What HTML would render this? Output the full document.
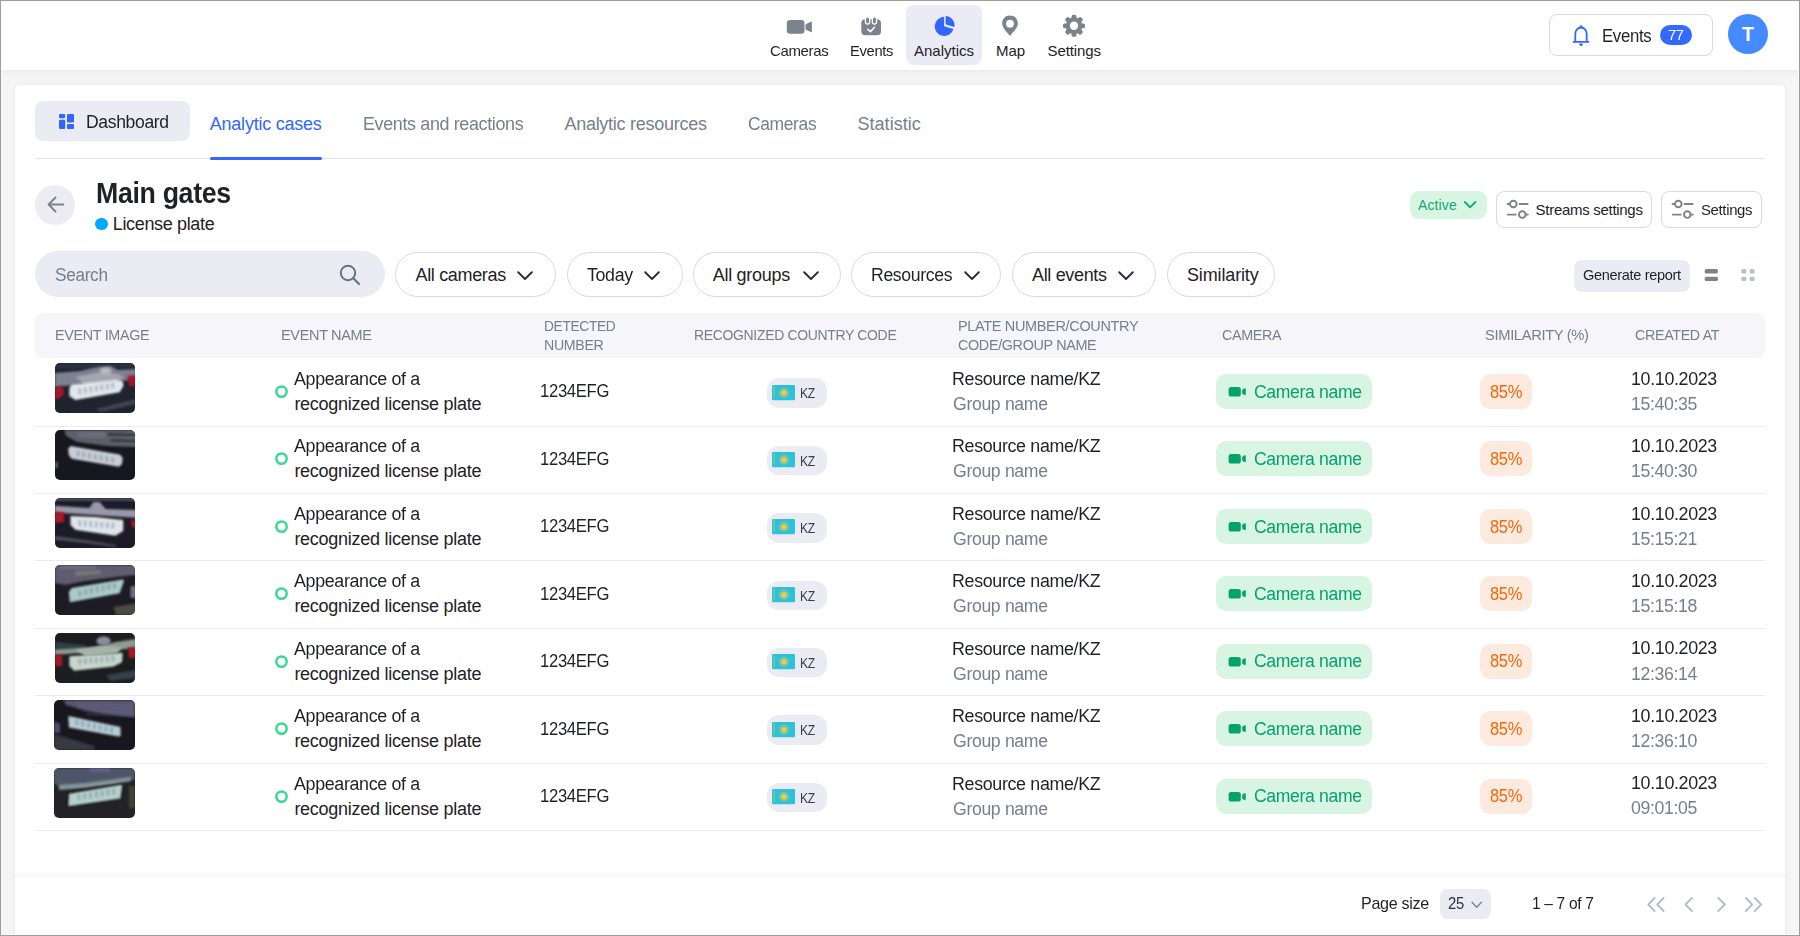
<!DOCTYPE html>
<html><head><meta charset="utf-8"><style>
html,body{margin:0;padding:0;}
body{width:1800px;height:936px;overflow:hidden;position:relative;background:#f5f5f5;font-family:"Liberation Sans",sans-serif;}
.t{position:absolute;white-space:nowrap;line-height:1;}
.b{position:absolute;box-sizing:border-box;}
.s{position:absolute;overflow:visible;}
</style></head><body>
<div class="b" style="left:0px;top:0px;width:1800px;height:70px;background:#ffffff;border-radius:0px;box-shadow:0 1px 6px rgba(0,0,0,0.07);z-index:1;"></div>
<div style="position:absolute;left:0;top:0;width:1800px;height:70px;z-index:2;">
<div class="b" style="left:906px;top:5px;width:76px;height:60px;background:#ebebf5;border-radius:8px;"></div>
<svg class="s" style="left:786px;top:19px;" width="26" height="16" viewBox="0 0 26 16"><rect x="0.8" y="1.1" width="17.7" height="13.6" rx="3.2" fill="#7b838c"/><path d="M20 5.6 L25.3 3 L25.3 12.8 L20 10.2 Z" fill="#7b838c" stroke="#7b838c" stroke-width="1" stroke-linejoin="round"/></svg>
<svg class="s" style="left:860px;top:16px;" width="22" height="21" viewBox="0 0 22 21"><rect x="1.3" y="3.2" width="19.7" height="16.1" rx="4" fill="#7b838c"/><rect x="5.45" y="0.9" width="4.2" height="7.2" rx="2.1" fill="#7b838c" stroke="#fff" stroke-width="1.3"/><rect x="12.35" y="0.9" width="4.2" height="7.2" rx="2.1" fill="#7b838c" stroke="#fff" stroke-width="1.3"/><path d="M7.8 13.3 L10.5 15.6 L14.5 11.2" fill="none" stroke="#fff" stroke-width="1.6" stroke-linecap="round" stroke-linejoin="round"/></svg>
<svg class="s" style="left:934px;top:16px;" width="22" height="22" viewBox="0 0 22 22"><path d="M10.1 0.8 L10.1 9.6 Q10.1 10.2 10.7 10.4 L19.5 13 A9.6 9.6 0 1 1 10.1 0.8 Z" fill="#3366ff"/><path d="M11.6 0.1 A9.2 9.2 0 0 1 20.4 10.9 L12.2 8.4 Q11.6 8.2 11.6 7.6 Z" fill="#3366ff"/></svg>
<svg class="s" style="left:1001px;top:15.4px;" width="18" height="22" viewBox="0 0 18 22"><path d="M9 0.5 C4.3 0.5 1.2 4 1.2 8.4 C1.2 12.6 6 17 9 21 C12 17 16.8 12.6 16.8 8.4 C16.8 4 13.7 0.5 9 0.5 Z" fill="#7b838c"/><circle cx="9" cy="8.7" r="3.9" fill="#fff"/></svg>
<svg class="s" style="left:1062px;top:14px;" width="24" height="24" viewBox="0 0 24 24"><rect x="9.6" y="0.8" width="4.8" height="6" rx="1.6" fill="#7b838c" transform="rotate(0 12 11.8)"/><rect x="9.6" y="0.8" width="4.8" height="6" rx="1.6" fill="#7b838c" transform="rotate(45 12 11.8)"/><rect x="9.6" y="0.8" width="4.8" height="6" rx="1.6" fill="#7b838c" transform="rotate(90 12 11.8)"/><rect x="9.6" y="0.8" width="4.8" height="6" rx="1.6" fill="#7b838c" transform="rotate(135 12 11.8)"/><rect x="9.6" y="0.8" width="4.8" height="6" rx="1.6" fill="#7b838c" transform="rotate(180 12 11.8)"/><rect x="9.6" y="0.8" width="4.8" height="6" rx="1.6" fill="#7b838c" transform="rotate(225 12 11.8)"/><rect x="9.6" y="0.8" width="4.8" height="6" rx="1.6" fill="#7b838c" transform="rotate(270 12 11.8)"/><rect x="9.6" y="0.8" width="4.8" height="6" rx="1.6" fill="#7b838c" transform="rotate(315 12 11.8)"/><circle cx="12" cy="11.8" r="8.4" fill="#7b838c"/><circle cx="12" cy="11.8" r="4.2" fill="#fff"/></svg>
<div class="t" style="left:769.7px;top:43.00px;font-size:15px;color:#1f2126;letter-spacing:-0.350px;transform:scaleX(0.9991);transform-origin:0 0;">Cameras</div>
<div class="t" style="left:849.8px;top:43.00px;font-size:15px;color:#1f2126;letter-spacing:-0.350px;transform:scaleX(0.9840);transform-origin:0 0;">Events</div>
<div class="t" style="left:914.0px;top:43.00px;font-size:15px;color:#1f2126;letter-spacing:-0.003px;">Analytics</div>
<div class="t" style="left:996.0px;top:43.00px;font-size:15px;color:#1f2126;letter-spacing:-0.090px;">Map</div>
<div class="t" style="left:1047.5px;top:43.00px;font-size:15px;color:#1f2126;letter-spacing:-0.100px;">Settings</div>
<div class="b" style="left:1549px;top:14px;width:164px;height:41.5px;background:#fff;border-radius:8px;border:1px solid #d5dae3;"></div>
<svg class="s" style="left:1572px;top:24px;" width="18" height="23" viewBox="0 0 18 23"><path d="M3.3 18.3 L3.3 10 C3.3 6.3 5.8 3.5 9 3.5 C12.2 3.5 14.7 6.3 14.7 10 L14.7 18.3" fill="none" stroke="#3366ff" stroke-width="1.8"/><path d="M1.6 17.9 L16.4 17.9" stroke="#3366ff" stroke-width="1.9" stroke-linecap="round"/><circle cx="9" cy="2.6" r="1.3" fill="#3366ff"/><path d="M7.6 20.2 L10.4 20.2 L9 21.7 Z" fill="#3366ff" stroke="#3366ff" stroke-width="1.2" stroke-linejoin="round"/></svg>
<div class="t" style="left:1601.8px;top:27.00px;font-size:18px;color:#1f2126;letter-spacing:-0.350px;transform:scaleX(0.9309);transform-origin:0 0;">Events</div>
<div class="b" style="left:1660px;top:25px;width:32px;height:20px;background:#3369ff;border-radius:10px;"></div>
<div class="t" style="left:1667.7px;top:27.00px;font-size:15px;color:#fff;letter-spacing:-0.350px;transform:scaleX(0.9795);transform-origin:0 0;">77</div>
<div class="b" style="left:1728px;top:14px;width:40px;height:40px;background:#458aff;border-radius:20px;"></div>
<div class="t" style="left:1742.0px;top:25.00px;font-size:19.5px;color:#fff;font-weight:bold;">T</div>
</div>
<div class="b" style="left:15px;top:85px;width:1770px;height:900px;background:#fff;border-radius:5px;box-shadow:0 0 6px rgba(0,0,0,0.06);"></div>
<div class="b" style="left:35px;top:101px;width:155px;height:40px;background:#ebebf3;border-radius:8px;"></div>
<svg class="s" style="left:59px;top:114px;" width="15" height="15" viewBox="0 0 15 15"><rect x="0" y="0" width="6.2" height="4.2" rx="1.1" fill="#3366ff"/><rect x="0" y="5.8" width="6.2" height="9.2" rx="1.1" fill="#3366ff"/><rect x="8" y="0" width="7" height="8.5" rx="1.1" fill="#3366ff"/><rect x="8" y="10" width="7" height="5" rx="1.1" fill="#3366ff"/></svg>
<div class="t" style="left:86.2px;top:113.00px;font-size:18px;color:#1f2126;letter-spacing:-0.350px;transform:scaleX(0.9747);transform-origin:0 0;">Dashboard</div>
<div class="t" style="left:209.8px;top:115.00px;font-size:18px;color:#3366ff;letter-spacing:-0.235px;">Analytic cases</div>
<div class="t" style="left:362.8px;top:115.00px;font-size:18px;color:#75808d;letter-spacing:-0.350px;transform:scaleX(0.9947);transform-origin:0 0;">Events and reactions</div>
<div class="t" style="left:564.4px;top:115.00px;font-size:18px;color:#75808d;letter-spacing:-0.262px;">Analytic resources</div>
<div class="t" style="left:748.0px;top:115.00px;font-size:18px;color:#75808d;letter-spacing:-0.350px;transform:scaleX(0.9673);transform-origin:0 0;">Cameras</div>
<div class="t" style="left:857.5px;top:115.00px;font-size:18px;color:#75808d;letter-spacing:0.035px;">Statistic</div>
<div class="b" style="left:35px;top:158px;width:1730px;height:1px;background:#dfe3ea;border-radius:0px;"></div>
<div class="b" style="left:210px;top:156.5px;width:112px;height:3px;background:#3366ff;border-radius:2px;"></div>
<div class="b" style="left:35px;top:185px;width:40px;height:40px;background:#ececf2;border-radius:20px;"></div>
<svg class="s" style="left:47px;top:196px;" width="18" height="18" viewBox="0 0 18 18"><path d="M16.3 8.5 L2.2 8.5 M8.5 1.5 L1.6 8.5 L8.5 15.5" fill="none" stroke="#7b838c" stroke-width="1.9" stroke-linecap="round" stroke-linejoin="round"/></svg>
<div class="t" style="left:96.2px;top:179.00px;font-size:29px;color:#1f2126;letter-spacing:-0.350px;transform:scaleX(0.9208);transform-origin:0 0;font-weight:bold;">Main gates</div>
<div class="b" style="left:95px;top:217.5px;width:12.5px;height:12.5px;background:#00aaff;border-radius:7px;"></div>
<div class="t" style="left:112.8px;top:215.00px;font-size:18px;color:#1f2126;letter-spacing:-0.348px;">License plate</div>
<div class="b" style="left:1410px;top:191px;width:77px;height:28px;background:#d8f5e4;border-radius:9px;"></div>
<div class="t" style="left:1418.0px;top:198.00px;font-size:14px;color:#12a776;letter-spacing:0.115px;">Active</div>
<svg class="s" style="left:1463px;top:200px;" width="15" height="10" viewBox="0 0 15 10"><path d="M1.8 2 L7.1 7.4 L12.4 2" fill="none" stroke="#12a776" stroke-width="1.8" stroke-linecap="round" stroke-linejoin="round"/></svg>
<div class="b" style="left:1495.5px;top:191px;width:156.5px;height:37px;background:#fff;border-radius:8px;border:1px solid #d5dae3;"></div>
<svg class="s" style="left:1507px;top:200px;" width="22" height="19" viewBox="0 0 22 19"><g fill="none" stroke="#7b838c" stroke-width="1.9" stroke-linecap="round"><circle cx="6.3" cy="4" r="3.3"/><path d="M0.6 4 L3 4 M12.6 4 L20.6 4"/><circle cx="15.3" cy="14.6" r="3.3"/><path d="M0.8 14.6 L8.8 14.6 M18.6 14.6 L20.8 14.6"/></g></svg>
<div class="t" style="left:1535.6px;top:202.00px;font-size:15px;color:#1f2126;letter-spacing:-0.294px;">Streams settings</div>
<div class="b" style="left:1660.5px;top:191px;width:101.5px;height:37px;background:#fff;border-radius:8px;border:1px solid #d5dae3;"></div>
<svg class="s" style="left:1671.5px;top:200px;" width="22" height="19" viewBox="0 0 22 19"><g fill="none" stroke="#7b838c" stroke-width="1.9" stroke-linecap="round"><circle cx="6.3" cy="4" r="3.3"/><path d="M0.6 4 L3 4 M12.6 4 L20.6 4"/><circle cx="15.3" cy="14.6" r="3.3"/><path d="M0.8 14.6 L8.8 14.6 M18.6 14.6 L20.8 14.6"/></g></svg>
<div class="t" style="left:1701.0px;top:202.00px;font-size:15px;color:#1f2126;letter-spacing:-0.350px;transform:scaleX(0.9952);transform-origin:0 0;">Settings</div>
<div class="b" style="left:35px;top:251px;width:350px;height:46px;background:#ebebf3;border-radius:23px;"></div>
<div class="t" style="left:55.1px;top:266.00px;font-size:18px;color:#75808d;letter-spacing:-0.350px;transform:scaleX(0.9587);transform-origin:0 0;">Search</div>
<svg class="s" style="left:339px;top:264px;" width="22" height="22" viewBox="0 0 22 22"><circle cx="9" cy="9" r="7.2" fill="none" stroke="#6b737c" stroke-width="2"/><path d="M14.3 14.3 L20 20" stroke="#6b737c" stroke-width="2.2" stroke-linecap="round"/></svg>
<div class="b" style="left:395px;top:252px;width:161px;height:45px;background:#fff;border-radius:23px;border:1px solid #d5dae3;"></div>
<div class="t" style="left:415.5px;top:266.00px;font-size:18px;color:#1f2126;letter-spacing:-0.333px;">All cameras</div>
<svg class="s" style="left:517px;top:270.5px;" width="16" height="10" viewBox="0 0 16 10"><path d="M1.2 1.2 L8 8 L14.8 1.2" fill="none" stroke="#2f3140" stroke-width="2" stroke-linecap="round" stroke-linejoin="round"/></svg>
<div class="b" style="left:566.6px;top:252px;width:116px;height:45px;background:#fff;border-radius:23px;border:1px solid #d5dae3;"></div>
<div class="t" style="left:586.7px;top:266.00px;font-size:18px;color:#1f2126;letter-spacing:-0.350px;transform:scaleX(0.9886);transform-origin:0 0;">Today</div>
<svg class="s" style="left:644px;top:270.5px;" width="16" height="10" viewBox="0 0 16 10"><path d="M1.2 1.2 L8 8 L14.8 1.2" fill="none" stroke="#2f3140" stroke-width="2" stroke-linecap="round" stroke-linejoin="round"/></svg>
<div class="b" style="left:693px;top:252px;width:147.5px;height:45px;background:#fff;border-radius:23px;border:1px solid #d5dae3;"></div>
<div class="t" style="left:712.7px;top:266.00px;font-size:18px;color:#1f2126;letter-spacing:-0.282px;">All groups</div>
<svg class="s" style="left:803px;top:270.5px;" width="16" height="10" viewBox="0 0 16 10"><path d="M1.2 1.2 L8 8 L14.8 1.2" fill="none" stroke="#2f3140" stroke-width="2" stroke-linecap="round" stroke-linejoin="round"/></svg>
<div class="b" style="left:851.2px;top:252px;width:150.2px;height:45px;background:#fff;border-radius:23px;border:1px solid #d5dae3;"></div>
<div class="t" style="left:870.5px;top:266.00px;font-size:18px;color:#1f2126;letter-spacing:-0.350px;transform:scaleX(0.9791);transform-origin:0 0;">Resources</div>
<svg class="s" style="left:963.5px;top:270.5px;" width="16" height="10" viewBox="0 0 16 10"><path d="M1.2 1.2 L8 8 L14.8 1.2" fill="none" stroke="#2f3140" stroke-width="2" stroke-linecap="round" stroke-linejoin="round"/></svg>
<div class="b" style="left:1012.4px;top:252px;width:144px;height:45px;background:#fff;border-radius:23px;border:1px solid #d5dae3;"></div>
<div class="t" style="left:1032.0px;top:266.00px;font-size:18px;color:#1f2126;letter-spacing:-0.338px;">All events</div>
<svg class="s" style="left:1118px;top:270.5px;" width="16" height="10" viewBox="0 0 16 10"><path d="M1.2 1.2 L8 8 L14.8 1.2" fill="none" stroke="#2f3140" stroke-width="2" stroke-linecap="round" stroke-linejoin="round"/></svg>
<div class="b" style="left:1167.4px;top:252px;width:108px;height:45px;background:#fff;border-radius:23px;border:1px solid #d5dae3;"></div>
<div class="t" style="left:1187.0px;top:266.00px;font-size:18px;color:#1f2126;letter-spacing:-0.144px;">Similarity</div>
<div class="b" style="left:1574px;top:259.5px;width:116px;height:32px;background:#ebebf3;border-radius:8px;"></div>
<div class="t" style="left:1583.0px;top:267.00px;font-size:15px;color:#1f2126;letter-spacing:-0.350px;transform:scaleX(0.9704);transform-origin:0 0;">Generate report</div>
<svg class="s" style="left:1704px;top:268px;" width="15" height="14" viewBox="0 0 15 14"><rect x="0.7" y="1.1" width="13.2" height="4.4" rx="1.6" fill="#7b838c"/><rect x="0.7" y="8.7" width="13.2" height="4.4" rx="1.6" fill="#7b838c"/></svg>
<svg class="s" style="left:1741px;top:268px;" width="15" height="14" viewBox="0 0 15 14"><g fill="#b9bfc6"><rect x="0.3" y="1.1" width="5" height="4.4" rx="1.5"/><rect x="8.6" y="1.1" width="5" height="4.4" rx="1.5"/><rect x="0.3" y="8.7" width="5" height="4.4" rx="1.5"/><rect x="8.6" y="8.7" width="5" height="4.4" rx="1.5"/></g></svg>
<div class="b" style="left:35px;top:313px;width:1730px;height:45px;background:#f5f5fa;border-radius:8px;"></div>
<div class="t" style="left:55.4px;top:327.00px;font-size:15px;color:#74808c;letter-spacing:-0.350px;transform:scaleX(0.9580);transform-origin:0 0;">EVENT IMAGE</div>
<div class="t" style="left:280.7px;top:327.00px;font-size:15px;color:#74808c;letter-spacing:-0.350px;transform:scaleX(0.9671);transform-origin:0 0;">EVENT NAME</div>
<div class="t" style="left:544.4px;top:318.00px;font-size:15px;color:#74808c;letter-spacing:-0.350px;transform:scaleX(0.9147);transform-origin:0 0;">DETECTED</div>
<div class="t" style="left:544.4px;top:337.00px;font-size:15px;color:#74808c;letter-spacing:-0.350px;transform:scaleX(0.9454);transform-origin:0 0;">NUMBER</div>
<div class="t" style="left:694.0px;top:327.00px;font-size:15px;color:#74808c;letter-spacing:-0.350px;transform:scaleX(0.9315);transform-origin:0 0;">RECOGNIZED COUNTRY CODE</div>
<div class="t" style="left:957.7px;top:318.00px;font-size:15px;color:#74808c;letter-spacing:-0.350px;transform:scaleX(0.9658);transform-origin:0 0;">PLATE NUMBER/COUNTRY</div>
<div class="t" style="left:957.7px;top:337.00px;font-size:15px;color:#74808c;letter-spacing:-0.350px;transform:scaleX(0.9569);transform-origin:0 0;">CODE/GROUP NAME</div>
<div class="t" style="left:1221.6px;top:327.00px;font-size:15px;color:#74808c;letter-spacing:-0.350px;transform:scaleX(0.9547);transform-origin:0 0;">CAMERA</div>
<div class="t" style="left:1485.2px;top:327.00px;font-size:15px;color:#74808c;letter-spacing:-0.350px;transform:scaleX(0.9809);transform-origin:0 0;">SIMILARITY (%)</div>
<div class="t" style="left:1635.0px;top:327.00px;font-size:15px;color:#74808c;letter-spacing:-0.350px;transform:scaleX(0.9515);transform-origin:0 0;">CREATED AT</div>
<div class="b" style="left:35px;top:426px;width:1730px;height:1px;background:#ebebf2;border-radius:0px;"></div>
<div class="b" style="left:55px;top:362.9px;width:80px;height:50px;border-radius:5px;overflow:hidden;"><svg width="81" height="50" viewBox="0 0 80 50" preserveAspectRatio="none" style="display:block"><defs><filter id="fb0" x="-20%" y="-20%" width="140%" height="140%"><feGaussianBlur stdDeviation="1.1"/></filter></defs><path d="M0.0 0.0 L80.0 0.0 L80.0 50.0 L0.0 50.0Z" fill="#202330"/><path d="M0.0 0.0 L80.0 0.0 L80.0 4.0 L0.0 6.0Z" fill="#2b3040" filter="url(#fb0)"/><path d="M0.0 10.0 L25.0 8.0 L42.0 4.0 L55.0 3.0 L62.0 7.0 L80.0 6.0 L80.0 16.0 L66.0 18.0 L40.0 19.0 L18.0 22.0 L0.0 24.0Z" fill="#7d808e" filter="url(#fb0)"/><path d="M20.0 14.0 L45.0 9.0 L62.0 11.0 L68.0 14.0 L60.0 19.0 L30.0 22.0Z" fill="#a3a6b2" filter="url(#fb0)"/><ellipse cx="50" cy="8" rx="6" ry="3.5" fill="#b5b7c2" filter="url(#fb0)"/><path d="M0.0 25.0 L7.0 23.0 L9.0 30.0 L4.0 36.0 L0.0 36.0Z" fill="#a8182c" filter="url(#fb0)"/><path d="M71.0 13.0 L80.0 12.0 L80.0 22.0 L74.0 24.0Z" fill="#a0182a" filter="url(#fb0)"/><path d="M14.2 25.1 L16.0 21.5 L40.0 19.0 L60.2 16.7 L66.8 17.9 L67.7 22.7 L63.8 29.3 L20.1 37.1 L14.2 32.9Z" fill="#e0e8ec" filter="url(#fb0)"/><path d="M40.0 46.0 L80.0 36.0 L80.0 41.0 L45.0 49.0Z" fill="#4e5560" opacity="0.7" filter="url(#fb0)"/><path d="M0.0 38.0 L8.0 36.0 L12.0 50.0 L0.0 50.0Z" fill="#1c2a26" opacity="0.8" filter="url(#fb0)"/><rect x="22.9" y="25.5" width="3.2" height="6" fill="#5a6670" opacity="0.3" filter="url(#fb0)"/><rect x="28.3" y="24.5" width="3.2" height="6" fill="#5a6670" opacity="0.3" filter="url(#fb0)"/><rect x="33.8" y="23.5" width="3.2" height="6" fill="#5a6670" opacity="0.3" filter="url(#fb0)"/><rect x="39.2" y="22.5" width="3.2" height="6" fill="#5a6670" opacity="0.3" filter="url(#fb0)"/><rect x="44.6" y="21.5" width="3.2" height="6" fill="#5a6670" opacity="0.3" filter="url(#fb0)"/><rect x="50.1" y="20.5" width="3.2" height="6" fill="#5a6670" opacity="0.3" filter="url(#fb0)"/><rect x="55.5" y="19.5" width="3.2" height="6" fill="#5a6670" opacity="0.3" filter="url(#fb0)"/></svg></div>
<svg class="s" style="left:274px;top:384.85px;" width="15" height="15" viewBox="0 0 15 15"><circle cx="7.5" cy="6.6" r="5.2" fill="none" stroke="#3ad993" stroke-width="2.5"/></svg>
<div class="t" style="left:294.4px;top:370.00px;font-size:18px;color:#1f2126;letter-spacing:-0.350px;transform:scaleX(0.9921);transform-origin:0 0;">Appearance of a</div>
<div class="t" style="left:294.4px;top:395.00px;font-size:18px;color:#1f2126;letter-spacing:-0.266px;">recognized license plate</div>
<div class="t" style="left:539.5px;top:382.00px;font-size:18px;color:#1f2126;letter-spacing:-0.350px;transform:scaleX(0.9260);transform-origin:0 0;">1234EFG</div>
<div class="b" style="left:766.7px;top:378.15000000000003px;width:60px;height:29.5px;background:#ebebf3;border-radius:12px;"></div>
<svg class="s" style="left:772px;top:384.55px;" width="24" height="16" viewBox="0 0 24 16"><rect x="0" y="0" width="23" height="15.3" rx="1.2" fill="#2cc2dc"/><path d="M1.5 1.2 L2.6 2.2 L1.5 3.2 L2.6 4.2 L1.5 5.2 L2.6 6.2 L1.5 7.2 L2.6 8.2 L1.5 9.2 L2.6 10.2 L1.5 11.2 L2.6 12.2 L1.5 13.2" fill="none" stroke="#d9c24a" stroke-width="0.8"/><path d="M12 7.8 L12 2.9" stroke="#f7c93e" stroke-width="0.9" transform="rotate(0 12 7.8)"/><path d="M12 7.8 L12 2.9" stroke="#f7c93e" stroke-width="0.9" transform="rotate(30 12 7.8)"/><path d="M12 7.8 L12 2.9" stroke="#f7c93e" stroke-width="0.9" transform="rotate(60 12 7.8)"/><path d="M12 7.8 L12 2.9" stroke="#f7c93e" stroke-width="0.9" transform="rotate(90 12 7.8)"/><path d="M12 7.8 L12 2.9" stroke="#f7c93e" stroke-width="0.9" transform="rotate(120 12 7.8)"/><path d="M12 7.8 L12 2.9" stroke="#f7c93e" stroke-width="0.9" transform="rotate(150 12 7.8)"/><path d="M12 7.8 L12 2.9" stroke="#f7c93e" stroke-width="0.9" transform="rotate(180 12 7.8)"/><path d="M12 7.8 L12 2.9" stroke="#f7c93e" stroke-width="0.9" transform="rotate(210 12 7.8)"/><path d="M12 7.8 L12 2.9" stroke="#f7c93e" stroke-width="0.9" transform="rotate(240 12 7.8)"/><path d="M12 7.8 L12 2.9" stroke="#f7c93e" stroke-width="0.9" transform="rotate(270 12 7.8)"/><path d="M12 7.8 L12 2.9" stroke="#f7c93e" stroke-width="0.9" transform="rotate(300 12 7.8)"/><path d="M12 7.8 L12 2.9" stroke="#f7c93e" stroke-width="0.9" transform="rotate(330 12 7.8)"/><circle cx="12" cy="7.8" r="3.3" fill="#2cc2dc"/><circle cx="12" cy="7.8" r="2.8" fill="#f9c83e"/></svg>
<div class="t" style="left:799.9px;top:385.00px;font-size:15px;color:#3a3d48;letter-spacing:-0.350px;transform:scaleX(0.8078);transform-origin:0 0;">KZ</div>
<div class="t" style="left:952.3px;top:370.00px;font-size:18px;color:#1f2126;letter-spacing:-0.350px;transform:scaleX(0.9925);transform-origin:0 0;">Resource name/KZ</div>
<div class="t" style="left:952.7px;top:395.00px;font-size:18px;color:#75808d;letter-spacing:-0.350px;transform:scaleX(0.9803);transform-origin:0 0;">Group name</div>
<div class="b" style="left:1216px;top:373.85px;width:156px;height:35px;background:#d8f5e4;border-radius:10px;"></div>
<svg class="s" style="left:1228px;top:385.85px;" width="19" height="12" viewBox="0 0 19 12"><rect x="0.6" y="0.9" width="12.2" height="9.6" rx="2.6" fill="#05a26c"/><path d="M14.4 4.6 Q14.4 3.6 15.4 3.2 L17.4 2.6 L17.4 8.8 L15.4 8.2 Q14.4 7.8 14.4 6.8 Z" fill="#05a26c" stroke="#05a26c" stroke-width="0.7" stroke-linejoin="round"/></svg>
<div class="t" style="left:1254.1px;top:383.00px;font-size:18px;color:#05a26c;letter-spacing:-0.350px;transform:scaleX(0.9770);transform-origin:0 0;">Camera name</div>
<div class="b" style="left:1480.4px;top:373.85px;width:51.6px;height:35px;background:#fceadf;border-radius:10px;"></div>
<div class="t" style="left:1490.0px;top:383.00px;font-size:18px;color:#ee6a0e;letter-spacing:-0.350px;transform:scaleX(0.9143);transform-origin:0 0;">85%</div>
<div class="t" style="left:1630.9px;top:370.00px;font-size:18px;color:#1f2126;letter-spacing:-0.350px;transform:scaleX(0.9926);transform-origin:0 0;">10.10.2023</div>
<div class="t" style="left:1630.9px;top:395.00px;font-size:18px;color:#75808d;letter-spacing:-0.350px;transform:scaleX(0.9820);transform-origin:0 0;">15:40:35</div>
<div class="b" style="left:35px;top:493px;width:1730px;height:1px;background:#ebebf2;border-radius:0px;"></div>
<div class="b" style="left:55px;top:430.3px;width:80px;height:50px;border-radius:5px;overflow:hidden;"><svg width="81" height="50" viewBox="0 0 80 50" preserveAspectRatio="none" style="display:block"><defs><filter id="fb1" x="-20%" y="-20%" width="140%" height="140%"><feGaussianBlur stdDeviation="1.1"/></filter></defs><path d="M0.0 0.0 L80.0 0.0 L80.0 50.0 L0.0 50.0Z" fill="#17171f"/><path d="M9.0 0.0 L80.0 0.0 L80.0 17.0 L52.0 16.0 L22.0 12.0 L11.0 6.0Z" fill="#5a5e6a" filter="url(#fb1)"/><path d="M20.0 2.0 L50.0 2.0 L50.0 8.0 L25.0 8.0Z" fill="#6e7080" opacity="0.8" filter="url(#fb1)"/><path d="M52.0 3.0 L80.0 4.0 L80.0 6.0 L52.0 5.5Z" fill="#2a2b33" opacity="0.8" filter="url(#fb1)"/><path d="M55.0 9.0 L80.0 10.0 L80.0 12.0 L55.0 11.5Z" fill="#2a2b33" opacity="0.8" filter="url(#fb1)"/><path d="M13.0 19.1 L15.3 16.1 L63.8 24.5 L66.8 27.5 L66.2 34.1 L63.2 36.8 L16.5 28.7 L13.6 25.1Z" fill="#c7ced7" filter="url(#fb1)"/><path d="M0.0 32.0 L3.0 32.0 L3.0 38.0 L0.0 38.0Z" fill="#7a7890" opacity="0.7" filter="url(#fb1)"/><rect x="21.1" y="20.5" width="3.2" height="6" fill="#5a6670" opacity="0.3" filter="url(#fb1)"/><rect x="26.8" y="21.6" width="3.2" height="6" fill="#5a6670" opacity="0.3" filter="url(#fb1)"/><rect x="32.5" y="22.7" width="3.2" height="6" fill="#5a6670" opacity="0.3" filter="url(#fb1)"/><rect x="38.2" y="23.8" width="3.2" height="6" fill="#5a6670" opacity="0.3" filter="url(#fb1)"/><rect x="43.9" y="24.8" width="3.2" height="6" fill="#5a6670" opacity="0.3" filter="url(#fb1)"/><rect x="49.6" y="25.9" width="3.2" height="6" fill="#5a6670" opacity="0.3" filter="url(#fb1)"/><rect x="55.3" y="27.0" width="3.2" height="6" fill="#5a6670" opacity="0.3" filter="url(#fb1)"/></svg></div>
<svg class="s" style="left:274px;top:452.32500000000005px;" width="15" height="15" viewBox="0 0 15 15"><circle cx="7.5" cy="6.6" r="5.2" fill="none" stroke="#3ad993" stroke-width="2.5"/></svg>
<div class="t" style="left:294.4px;top:437.00px;font-size:18px;color:#1f2126;letter-spacing:-0.350px;transform:scaleX(0.9921);transform-origin:0 0;">Appearance of a</div>
<div class="t" style="left:294.4px;top:462.00px;font-size:18px;color:#1f2126;letter-spacing:-0.266px;">recognized license plate</div>
<div class="t" style="left:539.5px;top:450.00px;font-size:18px;color:#1f2126;letter-spacing:-0.350px;transform:scaleX(0.9260);transform-origin:0 0;">1234EFG</div>
<div class="b" style="left:766.7px;top:445.62500000000006px;width:60px;height:29.5px;background:#ebebf3;border-radius:12px;"></div>
<svg class="s" style="left:772px;top:452.02500000000003px;" width="24" height="16" viewBox="0 0 24 16"><rect x="0" y="0" width="23" height="15.3" rx="1.2" fill="#2cc2dc"/><path d="M1.5 1.2 L2.6 2.2 L1.5 3.2 L2.6 4.2 L1.5 5.2 L2.6 6.2 L1.5 7.2 L2.6 8.2 L1.5 9.2 L2.6 10.2 L1.5 11.2 L2.6 12.2 L1.5 13.2" fill="none" stroke="#d9c24a" stroke-width="0.8"/><path d="M12 7.8 L12 2.9" stroke="#f7c93e" stroke-width="0.9" transform="rotate(0 12 7.8)"/><path d="M12 7.8 L12 2.9" stroke="#f7c93e" stroke-width="0.9" transform="rotate(30 12 7.8)"/><path d="M12 7.8 L12 2.9" stroke="#f7c93e" stroke-width="0.9" transform="rotate(60 12 7.8)"/><path d="M12 7.8 L12 2.9" stroke="#f7c93e" stroke-width="0.9" transform="rotate(90 12 7.8)"/><path d="M12 7.8 L12 2.9" stroke="#f7c93e" stroke-width="0.9" transform="rotate(120 12 7.8)"/><path d="M12 7.8 L12 2.9" stroke="#f7c93e" stroke-width="0.9" transform="rotate(150 12 7.8)"/><path d="M12 7.8 L12 2.9" stroke="#f7c93e" stroke-width="0.9" transform="rotate(180 12 7.8)"/><path d="M12 7.8 L12 2.9" stroke="#f7c93e" stroke-width="0.9" transform="rotate(210 12 7.8)"/><path d="M12 7.8 L12 2.9" stroke="#f7c93e" stroke-width="0.9" transform="rotate(240 12 7.8)"/><path d="M12 7.8 L12 2.9" stroke="#f7c93e" stroke-width="0.9" transform="rotate(270 12 7.8)"/><path d="M12 7.8 L12 2.9" stroke="#f7c93e" stroke-width="0.9" transform="rotate(300 12 7.8)"/><path d="M12 7.8 L12 2.9" stroke="#f7c93e" stroke-width="0.9" transform="rotate(330 12 7.8)"/><circle cx="12" cy="7.8" r="3.3" fill="#2cc2dc"/><circle cx="12" cy="7.8" r="2.8" fill="#f9c83e"/></svg>
<div class="t" style="left:799.9px;top:453.00px;font-size:15px;color:#3a3d48;letter-spacing:-0.350px;transform:scaleX(0.8078);transform-origin:0 0;">KZ</div>
<div class="t" style="left:952.3px;top:437.00px;font-size:18px;color:#1f2126;letter-spacing:-0.350px;transform:scaleX(0.9925);transform-origin:0 0;">Resource name/KZ</div>
<div class="t" style="left:952.7px;top:462.00px;font-size:18px;color:#75808d;letter-spacing:-0.350px;transform:scaleX(0.9803);transform-origin:0 0;">Group name</div>
<div class="b" style="left:1216px;top:441.32500000000005px;width:156px;height:35px;background:#d8f5e4;border-radius:10px;"></div>
<svg class="s" style="left:1228px;top:453.32500000000005px;" width="19" height="12" viewBox="0 0 19 12"><rect x="0.6" y="0.9" width="12.2" height="9.6" rx="2.6" fill="#05a26c"/><path d="M14.4 4.6 Q14.4 3.6 15.4 3.2 L17.4 2.6 L17.4 8.8 L15.4 8.2 Q14.4 7.8 14.4 6.8 Z" fill="#05a26c" stroke="#05a26c" stroke-width="0.7" stroke-linejoin="round"/></svg>
<div class="t" style="left:1254.1px;top:450.00px;font-size:18px;color:#05a26c;letter-spacing:-0.350px;transform:scaleX(0.9770);transform-origin:0 0;">Camera name</div>
<div class="b" style="left:1480.4px;top:441.32500000000005px;width:51.6px;height:35px;background:#fceadf;border-radius:10px;"></div>
<div class="t" style="left:1490.0px;top:450.00px;font-size:18px;color:#ee6a0e;letter-spacing:-0.350px;transform:scaleX(0.9143);transform-origin:0 0;">85%</div>
<div class="t" style="left:1630.9px;top:437.00px;font-size:18px;color:#1f2126;letter-spacing:-0.350px;transform:scaleX(0.9926);transform-origin:0 0;">10.10.2023</div>
<div class="t" style="left:1630.9px;top:462.00px;font-size:18px;color:#75808d;letter-spacing:-0.350px;transform:scaleX(0.9820);transform-origin:0 0;">15:40:30</div>
<div class="b" style="left:35px;top:560px;width:1730px;height:1px;background:#ebebf2;border-radius:0px;"></div>
<div class="b" style="left:55px;top:497.8px;width:80px;height:50px;border-radius:5px;overflow:hidden;"><svg width="81" height="50" viewBox="0 0 80 50" preserveAspectRatio="none" style="display:block"><defs><filter id="fb2" x="-20%" y="-20%" width="140%" height="140%"><feGaussianBlur stdDeviation="1.1"/></filter></defs><path d="M0.0 0.0 L80.0 0.0 L80.0 50.0 L0.0 50.0Z" fill="#1c1b27"/><path d="M0.0 0.0 L80.0 0.0 L80.0 3.0 L0.0 3.0Z" fill="#6b6a80" opacity="0.6" filter="url(#fb2)"/><path d="M0.0 7.8 L34.0 10.0 L38.0 4.0 L44.0 4.0 L50.0 11.0 L80.0 12.0 L80.0 19.7 L0.0 14.4Z" fill="#9a98a8" filter="url(#fb2)"/><path d="M0.0 14.0 L9.0 14.5 L9.0 24.0 L0.0 25.0Z" fill="#b0182c" filter="url(#fb2)"/><path d="M75.0 22.0 L80.0 22.0 L80.0 29.3 L76.0 29.3Z" fill="#a8182c" filter="url(#fb2)"/><path d="M15.3 18.0 L40.0 19.0 L67.4 22.1 L67.4 32.9 L59.6 37.7 L20.1 31.7 L15.3 26.9Z" fill="#dfe5eb" filter="url(#fb2)"/><path d="M0.0 38.0 L30.0 42.0 L60.0 47.0 L60.0 49.0 L30.0 45.0 L0.0 42.0Z" fill="#5a5c68" opacity="0.8" filter="url(#fb2)"/><rect x="22.9" y="22.2" width="3.2" height="6" fill="#5a6670" opacity="0.3" filter="url(#fb2)"/><rect x="28.3" y="22.6" width="3.2" height="6" fill="#5a6670" opacity="0.3" filter="url(#fb2)"/><rect x="33.8" y="23.1" width="3.2" height="6" fill="#5a6670" opacity="0.3" filter="url(#fb2)"/><rect x="39.2" y="23.5" width="3.2" height="6" fill="#5a6670" opacity="0.3" filter="url(#fb2)"/><rect x="44.6" y="23.9" width="3.2" height="6" fill="#5a6670" opacity="0.3" filter="url(#fb2)"/><rect x="50.1" y="24.4" width="3.2" height="6" fill="#5a6670" opacity="0.3" filter="url(#fb2)"/><rect x="55.5" y="24.8" width="3.2" height="6" fill="#5a6670" opacity="0.3" filter="url(#fb2)"/></svg></div>
<svg class="s" style="left:274px;top:519.775px;" width="15" height="15" viewBox="0 0 15 15"><circle cx="7.5" cy="6.6" r="5.2" fill="none" stroke="#3ad993" stroke-width="2.5"/></svg>
<div class="t" style="left:294.4px;top:505.00px;font-size:18px;color:#1f2126;letter-spacing:-0.350px;transform:scaleX(0.9921);transform-origin:0 0;">Appearance of a</div>
<div class="t" style="left:294.4px;top:530.00px;font-size:18px;color:#1f2126;letter-spacing:-0.266px;">recognized license plate</div>
<div class="t" style="left:539.5px;top:517.00px;font-size:18px;color:#1f2126;letter-spacing:-0.350px;transform:scaleX(0.9260);transform-origin:0 0;">1234EFG</div>
<div class="b" style="left:766.7px;top:513.075px;width:60px;height:29.5px;background:#ebebf3;border-radius:12px;"></div>
<svg class="s" style="left:772px;top:519.4749999999999px;" width="24" height="16" viewBox="0 0 24 16"><rect x="0" y="0" width="23" height="15.3" rx="1.2" fill="#2cc2dc"/><path d="M1.5 1.2 L2.6 2.2 L1.5 3.2 L2.6 4.2 L1.5 5.2 L2.6 6.2 L1.5 7.2 L2.6 8.2 L1.5 9.2 L2.6 10.2 L1.5 11.2 L2.6 12.2 L1.5 13.2" fill="none" stroke="#d9c24a" stroke-width="0.8"/><path d="M12 7.8 L12 2.9" stroke="#f7c93e" stroke-width="0.9" transform="rotate(0 12 7.8)"/><path d="M12 7.8 L12 2.9" stroke="#f7c93e" stroke-width="0.9" transform="rotate(30 12 7.8)"/><path d="M12 7.8 L12 2.9" stroke="#f7c93e" stroke-width="0.9" transform="rotate(60 12 7.8)"/><path d="M12 7.8 L12 2.9" stroke="#f7c93e" stroke-width="0.9" transform="rotate(90 12 7.8)"/><path d="M12 7.8 L12 2.9" stroke="#f7c93e" stroke-width="0.9" transform="rotate(120 12 7.8)"/><path d="M12 7.8 L12 2.9" stroke="#f7c93e" stroke-width="0.9" transform="rotate(150 12 7.8)"/><path d="M12 7.8 L12 2.9" stroke="#f7c93e" stroke-width="0.9" transform="rotate(180 12 7.8)"/><path d="M12 7.8 L12 2.9" stroke="#f7c93e" stroke-width="0.9" transform="rotate(210 12 7.8)"/><path d="M12 7.8 L12 2.9" stroke="#f7c93e" stroke-width="0.9" transform="rotate(240 12 7.8)"/><path d="M12 7.8 L12 2.9" stroke="#f7c93e" stroke-width="0.9" transform="rotate(270 12 7.8)"/><path d="M12 7.8 L12 2.9" stroke="#f7c93e" stroke-width="0.9" transform="rotate(300 12 7.8)"/><path d="M12 7.8 L12 2.9" stroke="#f7c93e" stroke-width="0.9" transform="rotate(330 12 7.8)"/><circle cx="12" cy="7.8" r="3.3" fill="#2cc2dc"/><circle cx="12" cy="7.8" r="2.8" fill="#f9c83e"/></svg>
<div class="t" style="left:799.9px;top:520.00px;font-size:15px;color:#3a3d48;letter-spacing:-0.350px;transform:scaleX(0.8078);transform-origin:0 0;">KZ</div>
<div class="t" style="left:952.3px;top:505.00px;font-size:18px;color:#1f2126;letter-spacing:-0.350px;transform:scaleX(0.9925);transform-origin:0 0;">Resource name/KZ</div>
<div class="t" style="left:952.7px;top:530.00px;font-size:18px;color:#75808d;letter-spacing:-0.350px;transform:scaleX(0.9803);transform-origin:0 0;">Group name</div>
<div class="b" style="left:1216px;top:508.775px;width:156px;height:35px;background:#d8f5e4;border-radius:10px;"></div>
<svg class="s" style="left:1228px;top:520.775px;" width="19" height="12" viewBox="0 0 19 12"><rect x="0.6" y="0.9" width="12.2" height="9.6" rx="2.6" fill="#05a26c"/><path d="M14.4 4.6 Q14.4 3.6 15.4 3.2 L17.4 2.6 L17.4 8.8 L15.4 8.2 Q14.4 7.8 14.4 6.8 Z" fill="#05a26c" stroke="#05a26c" stroke-width="0.7" stroke-linejoin="round"/></svg>
<div class="t" style="left:1254.1px;top:518.00px;font-size:18px;color:#05a26c;letter-spacing:-0.350px;transform:scaleX(0.9770);transform-origin:0 0;">Camera name</div>
<div class="b" style="left:1480.4px;top:508.775px;width:51.6px;height:35px;background:#fceadf;border-radius:10px;"></div>
<div class="t" style="left:1490.0px;top:518.00px;font-size:18px;color:#ee6a0e;letter-spacing:-0.350px;transform:scaleX(0.9143);transform-origin:0 0;">85%</div>
<div class="t" style="left:1630.9px;top:505.00px;font-size:18px;color:#1f2126;letter-spacing:-0.350px;transform:scaleX(0.9926);transform-origin:0 0;">10.10.2023</div>
<div class="t" style="left:1630.9px;top:530.00px;font-size:18px;color:#75808d;letter-spacing:-0.350px;transform:scaleX(0.9820);transform-origin:0 0;">15:15:21</div>
<div class="b" style="left:35px;top:628px;width:1730px;height:1px;background:#ebebf2;border-radius:0px;"></div>
<div class="b" style="left:55px;top:565.2px;width:80px;height:50px;border-radius:5px;overflow:hidden;"><svg width="81" height="50" viewBox="0 0 80 50" preserveAspectRatio="none" style="display:block"><defs><filter id="fb3" x="-20%" y="-20%" width="140%" height="140%"><feGaussianBlur stdDeviation="1.1"/></filter></defs><path d="M0.0 0.0 L80.0 0.0 L80.0 50.0 L0.0 50.0Z" fill="#1d1b23"/><path d="M0.0 0.0 L80.0 0.0 L80.0 10.0 L60.0 12.0 L30.0 16.0 L10.0 20.0 L0.0 18.0Z" fill="#5e5b70" filter="url(#fb3)"/><path d="M20.0 6.0 L45.0 5.0 L45.0 9.0 L20.0 11.0Z" fill="#8a8a78" opacity="0.6" filter="url(#fb3)"/><path d="M5.0 1.0 L40.0 1.0 L40.0 4.0 L5.0 4.0Z" fill="#7c7890" opacity="0.7" filter="url(#fb3)"/><path d="M13.6 27.1 L16.5 22.9 L66.8 14.6 L68.3 15.7 L63.8 28.3 L14.7 37.3Z" fill="#a9c9ca" filter="url(#fb3)"/><path d="M74.6 21.0 L80.0 21.0 L80.0 33.0 L74.6 33.0Z" fill="#8a84a0" opacity="0.8" filter="url(#fb3)"/><path d="M58.0 42.0 L80.0 38.0 L80.0 50.0 L60.0 50.0Z" fill="#5e6050" opacity="0.7" filter="url(#fb3)"/><rect x="23.1" y="25.4" width="3.2" height="6" fill="#5a6670" opacity="0.3" filter="url(#fb3)"/><rect x="28.8" y="24.1" width="3.2" height="6" fill="#5a6670" opacity="0.3" filter="url(#fb3)"/><rect x="34.5" y="22.8" width="3.2" height="6" fill="#5a6670" opacity="0.3" filter="url(#fb3)"/><rect x="40.2" y="21.5" width="3.2" height="6" fill="#5a6670" opacity="0.3" filter="url(#fb3)"/><rect x="45.9" y="20.2" width="3.2" height="6" fill="#5a6670" opacity="0.3" filter="url(#fb3)"/><rect x="51.6" y="18.9" width="3.2" height="6" fill="#5a6670" opacity="0.3" filter="url(#fb3)"/><rect x="57.3" y="17.6" width="3.2" height="6" fill="#5a6670" opacity="0.3" filter="url(#fb3)"/></svg></div>
<svg class="s" style="left:274px;top:587.225px;" width="15" height="15" viewBox="0 0 15 15"><circle cx="7.5" cy="6.6" r="5.2" fill="none" stroke="#3ad993" stroke-width="2.5"/></svg>
<div class="t" style="left:294.4px;top:572.00px;font-size:18px;color:#1f2126;letter-spacing:-0.350px;transform:scaleX(0.9921);transform-origin:0 0;">Appearance of a</div>
<div class="t" style="left:294.4px;top:597.00px;font-size:18px;color:#1f2126;letter-spacing:-0.266px;">recognized license plate</div>
<div class="t" style="left:539.5px;top:585.00px;font-size:18px;color:#1f2126;letter-spacing:-0.350px;transform:scaleX(0.9260);transform-origin:0 0;">1234EFG</div>
<div class="b" style="left:766.7px;top:580.5250000000001px;width:60px;height:29.5px;background:#ebebf3;border-radius:12px;"></div>
<svg class="s" style="left:772px;top:586.925px;" width="24" height="16" viewBox="0 0 24 16"><rect x="0" y="0" width="23" height="15.3" rx="1.2" fill="#2cc2dc"/><path d="M1.5 1.2 L2.6 2.2 L1.5 3.2 L2.6 4.2 L1.5 5.2 L2.6 6.2 L1.5 7.2 L2.6 8.2 L1.5 9.2 L2.6 10.2 L1.5 11.2 L2.6 12.2 L1.5 13.2" fill="none" stroke="#d9c24a" stroke-width="0.8"/><path d="M12 7.8 L12 2.9" stroke="#f7c93e" stroke-width="0.9" transform="rotate(0 12 7.8)"/><path d="M12 7.8 L12 2.9" stroke="#f7c93e" stroke-width="0.9" transform="rotate(30 12 7.8)"/><path d="M12 7.8 L12 2.9" stroke="#f7c93e" stroke-width="0.9" transform="rotate(60 12 7.8)"/><path d="M12 7.8 L12 2.9" stroke="#f7c93e" stroke-width="0.9" transform="rotate(90 12 7.8)"/><path d="M12 7.8 L12 2.9" stroke="#f7c93e" stroke-width="0.9" transform="rotate(120 12 7.8)"/><path d="M12 7.8 L12 2.9" stroke="#f7c93e" stroke-width="0.9" transform="rotate(150 12 7.8)"/><path d="M12 7.8 L12 2.9" stroke="#f7c93e" stroke-width="0.9" transform="rotate(180 12 7.8)"/><path d="M12 7.8 L12 2.9" stroke="#f7c93e" stroke-width="0.9" transform="rotate(210 12 7.8)"/><path d="M12 7.8 L12 2.9" stroke="#f7c93e" stroke-width="0.9" transform="rotate(240 12 7.8)"/><path d="M12 7.8 L12 2.9" stroke="#f7c93e" stroke-width="0.9" transform="rotate(270 12 7.8)"/><path d="M12 7.8 L12 2.9" stroke="#f7c93e" stroke-width="0.9" transform="rotate(300 12 7.8)"/><path d="M12 7.8 L12 2.9" stroke="#f7c93e" stroke-width="0.9" transform="rotate(330 12 7.8)"/><circle cx="12" cy="7.8" r="3.3" fill="#2cc2dc"/><circle cx="12" cy="7.8" r="2.8" fill="#f9c83e"/></svg>
<div class="t" style="left:799.9px;top:588.00px;font-size:15px;color:#3a3d48;letter-spacing:-0.350px;transform:scaleX(0.8078);transform-origin:0 0;">KZ</div>
<div class="t" style="left:952.3px;top:572.00px;font-size:18px;color:#1f2126;letter-spacing:-0.350px;transform:scaleX(0.9925);transform-origin:0 0;">Resource name/KZ</div>
<div class="t" style="left:952.7px;top:597.00px;font-size:18px;color:#75808d;letter-spacing:-0.350px;transform:scaleX(0.9803);transform-origin:0 0;">Group name</div>
<div class="b" style="left:1216px;top:576.225px;width:156px;height:35px;background:#d8f5e4;border-radius:10px;"></div>
<svg class="s" style="left:1228px;top:588.225px;" width="19" height="12" viewBox="0 0 19 12"><rect x="0.6" y="0.9" width="12.2" height="9.6" rx="2.6" fill="#05a26c"/><path d="M14.4 4.6 Q14.4 3.6 15.4 3.2 L17.4 2.6 L17.4 8.8 L15.4 8.2 Q14.4 7.8 14.4 6.8 Z" fill="#05a26c" stroke="#05a26c" stroke-width="0.7" stroke-linejoin="round"/></svg>
<div class="t" style="left:1254.1px;top:585.00px;font-size:18px;color:#05a26c;letter-spacing:-0.350px;transform:scaleX(0.9770);transform-origin:0 0;">Camera name</div>
<div class="b" style="left:1480.4px;top:576.225px;width:51.6px;height:35px;background:#fceadf;border-radius:10px;"></div>
<div class="t" style="left:1490.0px;top:585.00px;font-size:18px;color:#ee6a0e;letter-spacing:-0.350px;transform:scaleX(0.9143);transform-origin:0 0;">85%</div>
<div class="t" style="left:1630.9px;top:572.00px;font-size:18px;color:#1f2126;letter-spacing:-0.350px;transform:scaleX(0.9926);transform-origin:0 0;">10.10.2023</div>
<div class="t" style="left:1630.9px;top:597.00px;font-size:18px;color:#75808d;letter-spacing:-0.350px;transform:scaleX(0.9820);transform-origin:0 0;">15:15:18</div>
<div class="b" style="left:35px;top:695px;width:1730px;height:1px;background:#ebebf2;border-radius:0px;"></div>
<div class="b" style="left:55px;top:632.7px;width:80px;height:50px;border-radius:5px;overflow:hidden;"><svg width="81" height="50" viewBox="0 0 80 50" preserveAspectRatio="none" style="display:block"><defs><filter id="fb4" x="-20%" y="-20%" width="140%" height="140%"><feGaussianBlur stdDeviation="1.1"/></filter></defs><path d="M0.0 0.0 L80.0 0.0 L80.0 50.0 L0.0 50.0Z" fill="#1b1e20"/><path d="M0.0 9.0 L30.0 12.0 L30.0 18.0 L0.0 18.0Z" fill="#33434a" opacity="0.9" filter="url(#fb4)"/><path d="M0.0 16.7 L40.0 14.0 L60.0 9.0 L80.0 6.0 L80.0 15.0 L60.0 17.0 L0.0 22.0Z" fill="#8d9a8c" filter="url(#fb4)"/><path d="M20.0 17.0 L45.0 13.0 L66.0 14.0 L62.0 20.0 L30.0 23.0Z" fill="#a7b3a6" filter="url(#fb4)"/><ellipse cx="48" cy="8" rx="7" ry="4.5" fill="#8a8c9c" filter="url(#fb4)"/><path d="M0.0 22.0 L7.0 22.0 L7.0 33.0 L0.0 33.0Z" fill="#a8182c" filter="url(#fb4)"/><path d="M72.0 14.4 L80.0 14.4 L80.0 25.0 L73.0 25.0Z" fill="#a8182c" filter="url(#fb4)"/><path d="M14.2 23.3 L66.8 19.7 L66.2 29.3 L57.8 33.5 L18.9 37.7 L14.2 32.9Z" fill="#c6d6cc" filter="url(#fb4)"/><path d="M50.0 42.0 L80.0 37.0 L80.0 45.0 L55.0 48.0Z" fill="#3c4a56" opacity="0.8" filter="url(#fb4)"/><rect x="22.9" y="25.7" width="3.2" height="6" fill="#5a6670" opacity="0.3" filter="url(#fb4)"/><rect x="28.3" y="25.1" width="3.2" height="6" fill="#5a6670" opacity="0.3" filter="url(#fb4)"/><rect x="33.8" y="24.6" width="3.2" height="6" fill="#5a6670" opacity="0.3" filter="url(#fb4)"/><rect x="39.2" y="24.0" width="3.2" height="6" fill="#5a6670" opacity="0.3" filter="url(#fb4)"/><rect x="44.6" y="23.4" width="3.2" height="6" fill="#5a6670" opacity="0.3" filter="url(#fb4)"/><rect x="50.1" y="22.9" width="3.2" height="6" fill="#5a6670" opacity="0.3" filter="url(#fb4)"/><rect x="55.5" y="22.3" width="3.2" height="6" fill="#5a6670" opacity="0.3" filter="url(#fb4)"/></svg></div>
<svg class="s" style="left:274px;top:654.6750000000001px;" width="15" height="15" viewBox="0 0 15 15"><circle cx="7.5" cy="6.6" r="5.2" fill="none" stroke="#3ad993" stroke-width="2.5"/></svg>
<div class="t" style="left:294.4px;top:640.00px;font-size:18px;color:#1f2126;letter-spacing:-0.350px;transform:scaleX(0.9921);transform-origin:0 0;">Appearance of a</div>
<div class="t" style="left:294.4px;top:665.00px;font-size:18px;color:#1f2126;letter-spacing:-0.266px;">recognized license plate</div>
<div class="t" style="left:539.5px;top:652.00px;font-size:18px;color:#1f2126;letter-spacing:-0.350px;transform:scaleX(0.9260);transform-origin:0 0;">1234EFG</div>
<div class="b" style="left:766.7px;top:647.9750000000001px;width:60px;height:29.5px;background:#ebebf3;border-radius:12px;"></div>
<svg class="s" style="left:772px;top:654.375px;" width="24" height="16" viewBox="0 0 24 16"><rect x="0" y="0" width="23" height="15.3" rx="1.2" fill="#2cc2dc"/><path d="M1.5 1.2 L2.6 2.2 L1.5 3.2 L2.6 4.2 L1.5 5.2 L2.6 6.2 L1.5 7.2 L2.6 8.2 L1.5 9.2 L2.6 10.2 L1.5 11.2 L2.6 12.2 L1.5 13.2" fill="none" stroke="#d9c24a" stroke-width="0.8"/><path d="M12 7.8 L12 2.9" stroke="#f7c93e" stroke-width="0.9" transform="rotate(0 12 7.8)"/><path d="M12 7.8 L12 2.9" stroke="#f7c93e" stroke-width="0.9" transform="rotate(30 12 7.8)"/><path d="M12 7.8 L12 2.9" stroke="#f7c93e" stroke-width="0.9" transform="rotate(60 12 7.8)"/><path d="M12 7.8 L12 2.9" stroke="#f7c93e" stroke-width="0.9" transform="rotate(90 12 7.8)"/><path d="M12 7.8 L12 2.9" stroke="#f7c93e" stroke-width="0.9" transform="rotate(120 12 7.8)"/><path d="M12 7.8 L12 2.9" stroke="#f7c93e" stroke-width="0.9" transform="rotate(150 12 7.8)"/><path d="M12 7.8 L12 2.9" stroke="#f7c93e" stroke-width="0.9" transform="rotate(180 12 7.8)"/><path d="M12 7.8 L12 2.9" stroke="#f7c93e" stroke-width="0.9" transform="rotate(210 12 7.8)"/><path d="M12 7.8 L12 2.9" stroke="#f7c93e" stroke-width="0.9" transform="rotate(240 12 7.8)"/><path d="M12 7.8 L12 2.9" stroke="#f7c93e" stroke-width="0.9" transform="rotate(270 12 7.8)"/><path d="M12 7.8 L12 2.9" stroke="#f7c93e" stroke-width="0.9" transform="rotate(300 12 7.8)"/><path d="M12 7.8 L12 2.9" stroke="#f7c93e" stroke-width="0.9" transform="rotate(330 12 7.8)"/><circle cx="12" cy="7.8" r="3.3" fill="#2cc2dc"/><circle cx="12" cy="7.8" r="2.8" fill="#f9c83e"/></svg>
<div class="t" style="left:799.9px;top:655.00px;font-size:15px;color:#3a3d48;letter-spacing:-0.350px;transform:scaleX(0.8078);transform-origin:0 0;">KZ</div>
<div class="t" style="left:952.3px;top:640.00px;font-size:18px;color:#1f2126;letter-spacing:-0.350px;transform:scaleX(0.9925);transform-origin:0 0;">Resource name/KZ</div>
<div class="t" style="left:952.7px;top:665.00px;font-size:18px;color:#75808d;letter-spacing:-0.350px;transform:scaleX(0.9803);transform-origin:0 0;">Group name</div>
<div class="b" style="left:1216px;top:643.6750000000001px;width:156px;height:35px;background:#d8f5e4;border-radius:10px;"></div>
<svg class="s" style="left:1228px;top:655.6750000000001px;" width="19" height="12" viewBox="0 0 19 12"><rect x="0.6" y="0.9" width="12.2" height="9.6" rx="2.6" fill="#05a26c"/><path d="M14.4 4.6 Q14.4 3.6 15.4 3.2 L17.4 2.6 L17.4 8.8 L15.4 8.2 Q14.4 7.8 14.4 6.8 Z" fill="#05a26c" stroke="#05a26c" stroke-width="0.7" stroke-linejoin="round"/></svg>
<div class="t" style="left:1254.1px;top:652.00px;font-size:18px;color:#05a26c;letter-spacing:-0.350px;transform:scaleX(0.9770);transform-origin:0 0;">Camera name</div>
<div class="b" style="left:1480.4px;top:643.6750000000001px;width:51.6px;height:35px;background:#fceadf;border-radius:10px;"></div>
<div class="t" style="left:1490.0px;top:652.00px;font-size:18px;color:#ee6a0e;letter-spacing:-0.350px;transform:scaleX(0.9143);transform-origin:0 0;">85%</div>
<div class="t" style="left:1630.9px;top:639.00px;font-size:18px;color:#1f2126;letter-spacing:-0.350px;transform:scaleX(0.9926);transform-origin:0 0;">10.10.2023</div>
<div class="t" style="left:1630.9px;top:665.00px;font-size:18px;color:#75808d;letter-spacing:-0.350px;transform:scaleX(0.9820);transform-origin:0 0;">12:36:14</div>
<div class="b" style="left:35px;top:763px;width:1730px;height:1px;background:#ebebf2;border-radius:0px;"></div>
<div class="b" style="left:54px;top:700.1px;width:81px;height:50px;border-radius:5px;overflow:hidden;"><svg width="81" height="50" viewBox="0 0 80 50" preserveAspectRatio="none" style="display:block"><defs><filter id="fb5" x="-20%" y="-20%" width="140%" height="140%"><feGaussianBlur stdDeviation="1.1"/></filter></defs><path d="M0.0 0.0 L80.0 0.0 L80.0 50.0 L0.0 50.0Z" fill="#18171f"/><path d="M9.0 0.0 L80.0 0.0 L80.0 17.0 L50.0 14.0 L25.0 9.0 L12.0 5.0Z" fill="#55526e" filter="url(#fb5)"/><path d="M20.0 3.0 L80.0 5.0 L80.0 6.0 L20.0 4.0Z" fill="#8c88a8" opacity="0.5" filter="url(#fb5)"/><path d="M24.0 6.5 L80.0 8.5 L80.0 9.5 L24.0 7.5Z" fill="#8c88a8" opacity="0.5" filter="url(#fb5)"/><path d="M28.0 10.0 L80.0 12.0 L80.0 13.0 L28.0 11.0Z" fill="#8c88a8" opacity="0.5" filter="url(#fb5)"/><path d="M32.0 13.5 L80.0 15.5 L80.0 16.5 L32.0 14.5Z" fill="#8c88a8" opacity="0.5" filter="url(#fb5)"/><path d="M0.0 21.0 L6.0 24.0 L6.0 33.0 L0.0 33.0Z" fill="#5c5878" opacity="0.8" filter="url(#fb5)"/><path d="M0.0 34.0 L40.0 46.0 L40.0 50.0 L0.0 50.0Z" fill="#3a3c46" opacity="0.9" filter="url(#fb5)"/><path d="M14.2 16.1 L65.6 26.9 L65.9 35.9 L63.8 36.5 L14.7 27.5Z" fill="#b6ccd6" filter="url(#fb5)"/><rect x="21.1" y="19.6" width="3.2" height="6" fill="#5a6670" opacity="0.3" filter="url(#fb5)"/><rect x="26.8" y="20.8" width="3.2" height="6" fill="#5a6670" opacity="0.3" filter="url(#fb5)"/><rect x="32.5" y="22.0" width="3.2" height="6" fill="#5a6670" opacity="0.3" filter="url(#fb5)"/><rect x="38.2" y="23.2" width="3.2" height="6" fill="#5a6670" opacity="0.3" filter="url(#fb5)"/><rect x="43.9" y="24.5" width="3.2" height="6" fill="#5a6670" opacity="0.3" filter="url(#fb5)"/><rect x="49.6" y="25.7" width="3.2" height="6" fill="#5a6670" opacity="0.3" filter="url(#fb5)"/><rect x="55.3" y="26.9" width="3.2" height="6" fill="#5a6670" opacity="0.3" filter="url(#fb5)"/></svg></div>
<svg class="s" style="left:274px;top:722.125px;" width="15" height="15" viewBox="0 0 15 15"><circle cx="7.5" cy="6.6" r="5.2" fill="none" stroke="#3ad993" stroke-width="2.5"/></svg>
<div class="t" style="left:294.4px;top:707.00px;font-size:18px;color:#1f2126;letter-spacing:-0.350px;transform:scaleX(0.9921);transform-origin:0 0;">Appearance of a</div>
<div class="t" style="left:294.4px;top:732.00px;font-size:18px;color:#1f2126;letter-spacing:-0.266px;">recognized license plate</div>
<div class="t" style="left:539.5px;top:720.00px;font-size:18px;color:#1f2126;letter-spacing:-0.350px;transform:scaleX(0.9260);transform-origin:0 0;">1234EFG</div>
<div class="b" style="left:766.7px;top:715.425px;width:60px;height:29.5px;background:#ebebf3;border-radius:12px;"></div>
<svg class="s" style="left:772px;top:721.825px;" width="24" height="16" viewBox="0 0 24 16"><rect x="0" y="0" width="23" height="15.3" rx="1.2" fill="#2cc2dc"/><path d="M1.5 1.2 L2.6 2.2 L1.5 3.2 L2.6 4.2 L1.5 5.2 L2.6 6.2 L1.5 7.2 L2.6 8.2 L1.5 9.2 L2.6 10.2 L1.5 11.2 L2.6 12.2 L1.5 13.2" fill="none" stroke="#d9c24a" stroke-width="0.8"/><path d="M12 7.8 L12 2.9" stroke="#f7c93e" stroke-width="0.9" transform="rotate(0 12 7.8)"/><path d="M12 7.8 L12 2.9" stroke="#f7c93e" stroke-width="0.9" transform="rotate(30 12 7.8)"/><path d="M12 7.8 L12 2.9" stroke="#f7c93e" stroke-width="0.9" transform="rotate(60 12 7.8)"/><path d="M12 7.8 L12 2.9" stroke="#f7c93e" stroke-width="0.9" transform="rotate(90 12 7.8)"/><path d="M12 7.8 L12 2.9" stroke="#f7c93e" stroke-width="0.9" transform="rotate(120 12 7.8)"/><path d="M12 7.8 L12 2.9" stroke="#f7c93e" stroke-width="0.9" transform="rotate(150 12 7.8)"/><path d="M12 7.8 L12 2.9" stroke="#f7c93e" stroke-width="0.9" transform="rotate(180 12 7.8)"/><path d="M12 7.8 L12 2.9" stroke="#f7c93e" stroke-width="0.9" transform="rotate(210 12 7.8)"/><path d="M12 7.8 L12 2.9" stroke="#f7c93e" stroke-width="0.9" transform="rotate(240 12 7.8)"/><path d="M12 7.8 L12 2.9" stroke="#f7c93e" stroke-width="0.9" transform="rotate(270 12 7.8)"/><path d="M12 7.8 L12 2.9" stroke="#f7c93e" stroke-width="0.9" transform="rotate(300 12 7.8)"/><path d="M12 7.8 L12 2.9" stroke="#f7c93e" stroke-width="0.9" transform="rotate(330 12 7.8)"/><circle cx="12" cy="7.8" r="3.3" fill="#2cc2dc"/><circle cx="12" cy="7.8" r="2.8" fill="#f9c83e"/></svg>
<div class="t" style="left:799.9px;top:722.00px;font-size:15px;color:#3a3d48;letter-spacing:-0.350px;transform:scaleX(0.8078);transform-origin:0 0;">KZ</div>
<div class="t" style="left:952.3px;top:707.00px;font-size:18px;color:#1f2126;letter-spacing:-0.350px;transform:scaleX(0.9925);transform-origin:0 0;">Resource name/KZ</div>
<div class="t" style="left:952.7px;top:732.00px;font-size:18px;color:#75808d;letter-spacing:-0.350px;transform:scaleX(0.9803);transform-origin:0 0;">Group name</div>
<div class="b" style="left:1216px;top:711.125px;width:156px;height:35px;background:#d8f5e4;border-radius:10px;"></div>
<svg class="s" style="left:1228px;top:723.125px;" width="19" height="12" viewBox="0 0 19 12"><rect x="0.6" y="0.9" width="12.2" height="9.6" rx="2.6" fill="#05a26c"/><path d="M14.4 4.6 Q14.4 3.6 15.4 3.2 L17.4 2.6 L17.4 8.8 L15.4 8.2 Q14.4 7.8 14.4 6.8 Z" fill="#05a26c" stroke="#05a26c" stroke-width="0.7" stroke-linejoin="round"/></svg>
<div class="t" style="left:1254.1px;top:720.00px;font-size:18px;color:#05a26c;letter-spacing:-0.350px;transform:scaleX(0.9770);transform-origin:0 0;">Camera name</div>
<div class="b" style="left:1480.4px;top:711.125px;width:51.6px;height:35px;background:#fceadf;border-radius:10px;"></div>
<div class="t" style="left:1490.0px;top:720.00px;font-size:18px;color:#ee6a0e;letter-spacing:-0.350px;transform:scaleX(0.9143);transform-origin:0 0;">85%</div>
<div class="t" style="left:1630.9px;top:707.00px;font-size:18px;color:#1f2126;letter-spacing:-0.350px;transform:scaleX(0.9926);transform-origin:0 0;">10.10.2023</div>
<div class="t" style="left:1630.9px;top:732.00px;font-size:18px;color:#75808d;letter-spacing:-0.350px;transform:scaleX(0.9820);transform-origin:0 0;">12:36:10</div>
<div class="b" style="left:35px;top:830px;width:1730px;height:1px;background:#ebebf2;border-radius:0px;"></div>
<div class="b" style="left:54px;top:767.6px;width:81px;height:50px;border-radius:5px;overflow:hidden;"><svg width="81" height="50" viewBox="0 0 80 50" preserveAspectRatio="none" style="display:block"><defs><filter id="fb6" x="-20%" y="-20%" width="140%" height="140%"><feGaussianBlur stdDeviation="1.1"/></filter></defs><path d="M0.0 0.0 L80.0 0.0 L80.0 50.0 L0.0 50.0Z" fill="#232325"/><path d="M0.0 0.0 L80.0 0.0 L80.0 12.0 L60.0 12.0 L30.0 17.0 L5.0 19.0 L0.0 15.0Z" fill="#4e5668" filter="url(#fb6)"/><path d="M35.0 0.0 L55.0 0.0 L55.0 4.0 L35.0 4.0Z" fill="#6a6aa0" opacity="0.6" filter="url(#fb6)"/><path d="M5.0 17.0 L30.0 15.0 L60.0 11.0 L76.0 9.0 L76.0 13.0 L60.0 16.0 L30.0 20.0 L5.0 22.0Z" fill="#83949a" filter="url(#fb6)"/><path d="M13.2 24.7 L67.2 15.7 L68.4 16.3 L66.6 31.5 L13.2 39.3Z" fill="#141618" filter="url(#fb6)"/><path d="M14.7 25.7 L66.2 16.7 L67.4 17.3 L65.6 30.5 L14.2 38.3Z" fill="#b4d0cc" filter="url(#fb6)"/><path d="M74.0 18.0 L80.0 18.0 L80.0 40.0 L74.0 40.0Z" fill="#4a4838" opacity="0.8" filter="url(#fb6)"/><rect x="23.1" y="26.5" width="3.2" height="6" fill="#5a6670" opacity="0.3" filter="url(#fb6)"/><rect x="28.8" y="25.5" width="3.2" height="6" fill="#5a6670" opacity="0.3" filter="url(#fb6)"/><rect x="34.5" y="24.5" width="3.2" height="6" fill="#5a6670" opacity="0.3" filter="url(#fb6)"/><rect x="40.2" y="23.5" width="3.2" height="6" fill="#5a6670" opacity="0.3" filter="url(#fb6)"/><rect x="45.9" y="22.5" width="3.2" height="6" fill="#5a6670" opacity="0.3" filter="url(#fb6)"/><rect x="51.6" y="21.5" width="3.2" height="6" fill="#5a6670" opacity="0.3" filter="url(#fb6)"/><rect x="57.3" y="20.5" width="3.2" height="6" fill="#5a6670" opacity="0.3" filter="url(#fb6)"/></svg></div>
<svg class="s" style="left:274px;top:789.575px;" width="15" height="15" viewBox="0 0 15 15"><circle cx="7.5" cy="6.6" r="5.2" fill="none" stroke="#3ad993" stroke-width="2.5"/></svg>
<div class="t" style="left:294.4px;top:775.00px;font-size:18px;color:#1f2126;letter-spacing:-0.350px;transform:scaleX(0.9921);transform-origin:0 0;">Appearance of a</div>
<div class="t" style="left:294.4px;top:800.00px;font-size:18px;color:#1f2126;letter-spacing:-0.266px;">recognized license plate</div>
<div class="t" style="left:539.5px;top:787.00px;font-size:18px;color:#1f2126;letter-spacing:-0.350px;transform:scaleX(0.9260);transform-origin:0 0;">1234EFG</div>
<div class="b" style="left:766.7px;top:782.875px;width:60px;height:29.5px;background:#ebebf3;border-radius:12px;"></div>
<svg class="s" style="left:772px;top:789.2750000000001px;" width="24" height="16" viewBox="0 0 24 16"><rect x="0" y="0" width="23" height="15.3" rx="1.2" fill="#2cc2dc"/><path d="M1.5 1.2 L2.6 2.2 L1.5 3.2 L2.6 4.2 L1.5 5.2 L2.6 6.2 L1.5 7.2 L2.6 8.2 L1.5 9.2 L2.6 10.2 L1.5 11.2 L2.6 12.2 L1.5 13.2" fill="none" stroke="#d9c24a" stroke-width="0.8"/><path d="M12 7.8 L12 2.9" stroke="#f7c93e" stroke-width="0.9" transform="rotate(0 12 7.8)"/><path d="M12 7.8 L12 2.9" stroke="#f7c93e" stroke-width="0.9" transform="rotate(30 12 7.8)"/><path d="M12 7.8 L12 2.9" stroke="#f7c93e" stroke-width="0.9" transform="rotate(60 12 7.8)"/><path d="M12 7.8 L12 2.9" stroke="#f7c93e" stroke-width="0.9" transform="rotate(90 12 7.8)"/><path d="M12 7.8 L12 2.9" stroke="#f7c93e" stroke-width="0.9" transform="rotate(120 12 7.8)"/><path d="M12 7.8 L12 2.9" stroke="#f7c93e" stroke-width="0.9" transform="rotate(150 12 7.8)"/><path d="M12 7.8 L12 2.9" stroke="#f7c93e" stroke-width="0.9" transform="rotate(180 12 7.8)"/><path d="M12 7.8 L12 2.9" stroke="#f7c93e" stroke-width="0.9" transform="rotate(210 12 7.8)"/><path d="M12 7.8 L12 2.9" stroke="#f7c93e" stroke-width="0.9" transform="rotate(240 12 7.8)"/><path d="M12 7.8 L12 2.9" stroke="#f7c93e" stroke-width="0.9" transform="rotate(270 12 7.8)"/><path d="M12 7.8 L12 2.9" stroke="#f7c93e" stroke-width="0.9" transform="rotate(300 12 7.8)"/><path d="M12 7.8 L12 2.9" stroke="#f7c93e" stroke-width="0.9" transform="rotate(330 12 7.8)"/><circle cx="12" cy="7.8" r="3.3" fill="#2cc2dc"/><circle cx="12" cy="7.8" r="2.8" fill="#f9c83e"/></svg>
<div class="t" style="left:799.9px;top:790.00px;font-size:15px;color:#3a3d48;letter-spacing:-0.350px;transform:scaleX(0.8078);transform-origin:0 0;">KZ</div>
<div class="t" style="left:952.3px;top:775.00px;font-size:18px;color:#1f2126;letter-spacing:-0.350px;transform:scaleX(0.9925);transform-origin:0 0;">Resource name/KZ</div>
<div class="t" style="left:952.7px;top:800.00px;font-size:18px;color:#75808d;letter-spacing:-0.350px;transform:scaleX(0.9803);transform-origin:0 0;">Group name</div>
<div class="b" style="left:1216px;top:778.575px;width:156px;height:35px;background:#d8f5e4;border-radius:10px;"></div>
<svg class="s" style="left:1228px;top:790.575px;" width="19" height="12" viewBox="0 0 19 12"><rect x="0.6" y="0.9" width="12.2" height="9.6" rx="2.6" fill="#05a26c"/><path d="M14.4 4.6 Q14.4 3.6 15.4 3.2 L17.4 2.6 L17.4 8.8 L15.4 8.2 Q14.4 7.8 14.4 6.8 Z" fill="#05a26c" stroke="#05a26c" stroke-width="0.7" stroke-linejoin="round"/></svg>
<div class="t" style="left:1254.1px;top:787.00px;font-size:18px;color:#05a26c;letter-spacing:-0.350px;transform:scaleX(0.9770);transform-origin:0 0;">Camera name</div>
<div class="b" style="left:1480.4px;top:778.575px;width:51.6px;height:35px;background:#fceadf;border-radius:10px;"></div>
<div class="t" style="left:1490.0px;top:787.00px;font-size:18px;color:#ee6a0e;letter-spacing:-0.350px;transform:scaleX(0.9143);transform-origin:0 0;">85%</div>
<div class="t" style="left:1630.9px;top:774.00px;font-size:18px;color:#1f2126;letter-spacing:-0.350px;transform:scaleX(0.9926);transform-origin:0 0;">10.10.2023</div>
<div class="t" style="left:1630.9px;top:799.00px;font-size:18px;color:#75808d;letter-spacing:-0.350px;transform:scaleX(0.9820);transform-origin:0 0;">09:01:05</div>
<div class="b" style="left:15px;top:871px;width:1770px;height:7px;background:linear-gradient(to bottom, rgba(242,242,246,0), rgba(242,242,246,0.6));border-radius:0px;"></div>
<div class="t" style="left:1361.3px;top:895.00px;font-size:17px;color:#1f2126;letter-spacing:-0.350px;transform:scaleX(0.9477);transform-origin:0 0;">Page size</div>
<div class="b" style="left:1440px;top:889px;width:51px;height:30px;background:#ebebf3;border-radius:8px;"></div>
<div class="t" style="left:1447.9px;top:895.00px;font-size:17px;color:#2f3140;letter-spacing:-0.350px;transform:scaleX(0.8729);transform-origin:0 0;">25</div>
<svg class="s" style="left:1471px;top:901px;" width="12" height="8" viewBox="0 0 12 8"><path d="M1 1.2 L5.7 6.3 L10.4 1.2" fill="none" stroke="#7b838c" stroke-width="1.3" stroke-linecap="round" stroke-linejoin="round"/></svg>
<div class="t" style="left:1532.3px;top:895.00px;font-size:17px;color:#1f2126;letter-spacing:-0.350px;transform:scaleX(0.9123);transform-origin:0 0;">1 – 7 of 7</div>
<svg class="s" style="left:1646px;top:896.5px;" width="20" height="16" viewBox="0 0 20 16"><path d="M8.6 1 L2.2 7.5 L8.6 14 M17.6 1 L11.2 7.5 L17.6 14" fill="none" stroke="#b7bcc4" stroke-width="1.8" stroke-linecap="round" stroke-linejoin="round"/></svg>
<svg class="s" style="left:1682px;top:896.5px;" width="13" height="16" viewBox="0 0 13 16"><path d="M10 1 L3.4 7.5 L10 14" fill="none" stroke="#b7bcc4" stroke-width="1.8" stroke-linecap="round" stroke-linejoin="round"/></svg>
<svg class="s" style="left:1716px;top:896.5px;" width="13" height="16" viewBox="0 0 13 16"><path d="M2.3 1 L8.9 7.5 L2.3 14" fill="none" stroke="#b7bcc4" stroke-width="1.8" stroke-linecap="round" stroke-linejoin="round"/></svg>
<svg class="s" style="left:1743px;top:896.5px;" width="21" height="16" viewBox="0 0 21 16"><path d="M2.8 1 L9.2 7.5 L2.8 14 M11.8 1 L18.2 7.5 L11.8 14" fill="none" stroke="#b7bcc4" stroke-width="1.8" stroke-linecap="round" stroke-linejoin="round"/></svg>
<div class="b" style="left:1798px;top:0px;width:1px;height:936px;background:#fff;border-radius:0px;z-index:5;"></div>
<div class="b" style="left:0px;top:934px;width:1800px;height:1px;background:#fff;border-radius:0px;z-index:5;"></div>
<div class="b" style="left:0;top:0;width:1800px;height:936px;border:1px solid #9e9e9e;z-index:6;border-right-color:#9a9a9a;"></div>
</body></html>
